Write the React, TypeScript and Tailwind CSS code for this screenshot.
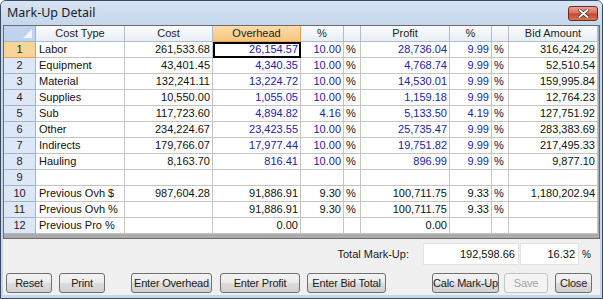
import React from "react";

type Row = {
  n: number;
  type: string;
  cost: string;
  ovh: string;
  ovhPct: string;
  ovhSign: boolean;
  profit: string;
  proPct: string;
  proSign: boolean;
  bid: string;
  blue: boolean;
};

const mk = (
  n: number,
  type: string,
  cost: string,
  ovh: string,
  ovhPct: string,
  profit: string,
  proPct: string,
  bid: string,
  blue = true,
  ovhSign = true,
  proSign = true
): Row => ({ n, type, cost, ovh, ovhPct, ovhSign, profit, proPct, proSign, bid, blue });

const rows: Row[] = [
  mk(1, "Labor", "261,533.68", "26,154.57", "10.00", "28,736.04", "9.99", "316,424.29"),
  mk(2, "Equipment", "43,401.45", "4,340.35", "10.00", "4,768.74", "9.99", "52,510.54"),
  mk(3, "Material", "132,241.11", "13,224.72", "10.00", "14,530.01", "9.99", "159,995.84"),
  mk(4, "Supplies", "10,550.00", "1,055.05", "10.00", "1,159.18", "9.99", "12,764.23"),
  mk(5, "Sub", "117,723.60", "4,894.82", "4.16", "5,133.50", "4.19", "127,751.92"),
  mk(6, "Other", "234,224.67", "23,423.55", "10.00", "25,735.47", "9.99", "283,383.69"),
  mk(7, "Indirects", "179,766.07", "17,977.44", "10.00", "19,751.82", "9.99", "217,495.33"),
  mk(8, "Hauling", "8,163.70", "816.41", "10.00", "896.99", "9.99", "9,877.10"),
  mk(9, "", "", "", "", "", "", "", false, false, false),
  mk(10, "Previous Ovh $", "987,604.28", "91,886.91", "9.30", "100,711.75", "9.33", "1,180,202.94", false),
  mk(11, "Previous Ovh %", "", "91,886.91", "9.30", "100,711.75", "9.33", "", false),
  mk(12, "Previous Pro %", "", "0.00", "", "0.00", "", "", false, false, false),
];

const font = { fontFamily: '"Liberation Sans", Arial, sans-serif' };

const cell = "h-[16px] border-r border-b border-[#c4c4c4] bg-white text-[11px] leading-[15px] overflow-hidden whitespace-nowrap";

function Btn({ label, w, ml, disabled }: { label: string; w: string; ml: string; disabled?: boolean }) {
  return (
    <div
      className={`${w} ${ml} h-[20px] rounded-[3px] border flex items-center justify-center text-[11px] tracking-[-0.2px] ${
        disabled
          ? "border-[#c2c5c8] text-[#a3a3a3] bg-[#f4f4f4]"
          : "border-[#707070] text-[#1a1a1a] bg-[linear-gradient(#f3f3f3_0%,#ebebeb_50%,#dddddd_51%,#d0d0d0_100%)]"
      }`}
    >
      {label}
    </div>
  );
}

export default function App() {
  const blueTxt = "text-[#2222a4]";
  return (
    <div className="w-[603px] h-[299px] overflow-hidden bg-white" style={font}>
      <div className="w-[603px] h-[299px] bg-[#c3d6ec] border border-[#3a4a5e] rounded-t-[6px] flex flex-col">
        {/* title bar */}
        <div className="h-[24px] flex items-center justify-between pl-[6px] pr-[4px] bg-[linear-gradient(#d6e3f3,#c5d7ed)] rounded-t-[5px]">
          <span className="text-[13px] text-[#1b1b1b]" style={{ fontFamily: '"Noto Sans", "Liberation Sans", sans-serif', fontSize: 12.5 }}>
            Mark-Up Detail
          </span>
          <div className="w-[30px] h-[15px] rounded-[3px] border border-[#6d2a20] bg-[linear-gradient(#e9a192_0%,#d8705c_45%,#c7462f_55%,#d9784f_100%)] flex items-center justify-center">
            <svg width="11" height="9" viewBox="0 0 11 9">
              <path d="M1.5 1 L9.5 8 M9.5 1 L1.5 8" stroke="#3a1a14" strokeWidth="3.2" strokeLinecap="round" />
              <path d="M1.5 1 L9.5 8 M9.5 1 L1.5 8" stroke="#ffffff" strokeWidth="2" strokeLinecap="round" />
            </svg>
          </div>
        </div>

        {/* content */}
        <div className="flex-1 mx-[2px] mb-[3px] bg-[#f0f0f0] flex flex-col">
          {/* grid */}
          <div className="mt-[0px] h-[214px] border border-[#6b6b6b] bg-[#ababab] flex flex-col">
            <div className="grid grid-cols-[32px_89px_88px_88px_43px_17px_89px_42px_17px_89px]">
              {/* header */}
              <div className="h-[16px] border-r border-b border-[#9eb6ce] bg-[#bfd3ec] relative">
                <svg className="absolute right-[3px] bottom-[3px]" width="9" height="9" viewBox="0 0 9 9">
                  <path d="M9 0 L9 9 L0 9 Z" fill="#f2f6fb" />
                </svg>
              </div>
              {["Cost Type", "Cost", "Overhead", "%", "", "Profit", "%", "", "Bid Amount"].map((h, i) => (
                <div
                  key={i}
                  className={`h-[16px] border-r border-b text-[11px] leading-[15px] text-center text-[#1e1e1e] ${
                    h === "Overhead"
                      ? "border-[#e3a34b] bg-[linear-gradient(#fbdcaa,#f7c57f)]"
                      : "border-[#a9bdd3] bg-[linear-gradient(#fafbfd,#e9eef5)]"
                  }`}
                >
                  {h}
                </div>
              ))}
              {rows.map((r) => {
                const c = r.blue ? blueTxt : "text-[#111]";
                return (
                  <React.Fragment key={r.n}>
                    <div
                      className={`h-[16px] border-r border-b text-[11px] leading-[15px] text-center text-[#1e1e1e] ${
                        r.n === 1 ? "bg-[#f9d499] border-[#e1a54f]" : "bg-[#dde7f5] border-[#9eb6ce]"
                      }`}
                    >
                      {r.n}
                    </div>
                    <div className={`${cell} pl-[3px] text-[#111]`}>{r.type}</div>
                    <div className={`${cell} text-right pr-[2px] text-[#111]`}>{r.cost}</div>
                    <div
                      className={`${cell} text-right pr-[2px] ${c} ${
                        r.n === 1 ? "outline outline-2 -outline-offset-2 outline-black" : ""
                      }`}
                    >
                      {r.ovh}
                    </div>
                    <div className={`${cell} text-right pr-[2px] ${c}`}>{r.ovhPct}</div>
                    <div className={`${cell} pl-[2px] text-[#111] text-[10px]`}>{r.ovhSign ? "%" : ""}</div>
                    <div className={`${cell} text-right pr-[2px] ${c}`}>{r.profit}</div>
                    <div className={`${cell} text-right pr-[2px] ${c}`}>{r.proPct}</div>
                    <div className={`${cell} pl-[2px] text-[#111] text-[10px]`}>{r.proSign ? "%" : ""}</div>
                    <div className={`${cell} text-right pr-[2px] text-[#111]`}>{r.bid}</div>
                  </React.Fragment>
                );
              })}
            </div>
          </div>

          {/* total row */}
          <div className="mt-[4px] h-[22px] flex items-center">
            <div className="w-[406px] text-right text-[11px] text-[#1a1a1a] pr-[0px]">Total Mark-Up:</div>
            <div className="ml-[14px] w-[96px] h-[22px] bg-white border border-[#e2e2e2] text-right pr-[3px] text-[11px] leading-[20px] text-[#111]">
              192,598.66
            </div>
            <div className="ml-[1px] w-[59px] h-[22px] bg-white border border-[#e2e2e2] text-right pr-[3px] text-[11px] leading-[20px] text-[#111]">
              16.32
            </div>
            <div className="ml-[3px] text-[10px] text-[#111]">%</div>
          </div>

          {/* buttons */}
          <div className="mt-[8px] flex items-center">
            <Btn label="Reset" w="w-[46px]" ml="ml-[3px]" />
            <Btn label="Print" w="w-[46px]" ml="ml-[7px]" />
            <Btn label="Enter Overhead" w="w-[81px]" ml="ml-[26px]" />
            <Btn label="Enter Profit" w="w-[80px]" ml="ml-[8px]" />
            <Btn label="Enter Bid Total" w="w-[79px]" ml="ml-[7px]" />
            <Btn label="Calc Mark-Up" w="w-[67px]" ml="ml-[46px]" />
            <Btn label="Save" w="w-[44px]" ml="ml-[5px]" disabled />
            <Btn label="Close" w="w-[37px]" ml="ml-[7px]" />
          </div>
        </div>
      </div>
    </div>
  );
}
